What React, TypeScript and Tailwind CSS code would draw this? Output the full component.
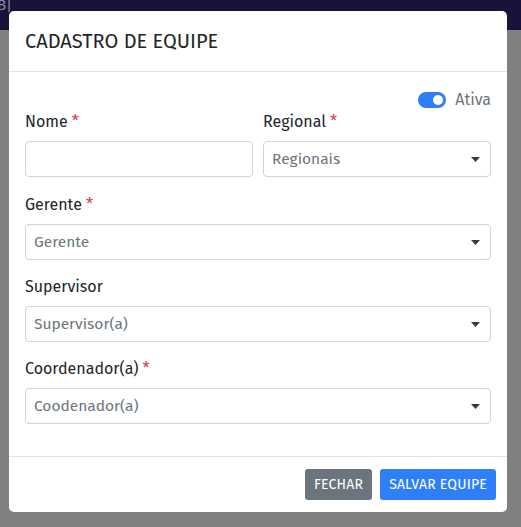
import React from "react";

const font = { fontFamily: '"Fira Sans", "Noto Sans", sans-serif' };

function Label({ text, req }: { text: string; req?: boolean }) {
  return (
    <div className="h-[22px] mb-[8px] text-[16px] leading-[22px] text-[#212529]">
      {text}
      {req && <span className="text-[#dc3545] ml-[4px]">*</span>}
    </div>
  );
}

function Select({ placeholder }: { placeholder: string }) {
  return (
    <div className="h-[36px] border border-[#ced4da] rounded-[4px] flex items-center justify-between pl-[8px] pr-[10px] bg-white">
      <span className="text-[15.5px] text-[#6c757d] mt-[2px]">{placeholder}</span>
      <svg width="9" height="5" viewBox="0 0 9 5">
        <path d="M0 0 L9 0 L4.5 5 Z" fill="#343a40" />
      </svg>
    </div>
  );
}

export default function App() {
  return (
    <div className="relative w-[521px] h-[527px] bg-[#7f8082] overflow-hidden" style={font}>
      <div className="h-[30px] bg-[#17133a] flex items-start">
        <span className="ml-[-3px] mt-[-4px] text-[15px] text-[#8c8aa0] leading-[18px]">B|</span>
      </div>
      <div className="absolute left-[9px] top-[11px] w-[498px] h-[501px] bg-white rounded-[5px] flex flex-col">
        <div className="h-[61px] border-b border-[#dee2e6] px-[16px] flex items-center">
          <h5 className="text-[20px] leading-[24px] text-[#212529]">CADASTRO DE EQUIPE</h5>
        </div>
        <div className="flex-1 px-[16px] pt-[17px]">
          <div className="h-[22px] flex justify-end items-center gap-[9px]">
            <div className="w-[28px] h-[16px] rounded-full bg-[#2f7ff8] flex items-center justify-end pr-[3px]">
              <div className="w-[10px] h-[10px] rounded-full bg-white" />
            </div>
            <span className="text-[16px] text-[#6c757d]">Ativa</span>
          </div>
          <div className="grid grid-cols-2 gap-x-[10px]">
            <div className="mb-[17px]">
              <Label text="Nome" req />
              <div className="h-[36px] border border-[#ced4da] rounded-[4px] bg-white" />
            </div>
            <div className="mb-[17px]">
              <Label text="Regional" req />
              <Select placeholder="Regionais" />
            </div>
          </div>
          <div className="mb-[16px]">
            <Label text="Gerente" req />
            <Select placeholder="Gerente" />
          </div>
          <div className="mb-[16px]">
            <Label text="Supervisor" />
            <Select placeholder="Supervisor(a)" />
          </div>
          <div className="mb-[16px]">
            <Label text="Coordenador(a)" req />
            <Select placeholder="Coodenador(a)" />
          </div>
        </div>
        <div className="h-[56px] border-t border-[#dee2e6] pl-[12px] pr-[11px] flex items-center justify-end gap-[8px]">
          <button className="h-[31px] px-[9px] rounded-[3px] bg-[#6c757d] text-white text-[14px] tracking-[0.2px]">FECHAR</button>
          <button className="h-[31px] px-[9px] rounded-[3px] bg-[#2f7ff8] text-white text-[14px] tracking-[0.2px]">SALVAR EQUIPE</button>
        </div>
      </div>
    </div>
  );
}
